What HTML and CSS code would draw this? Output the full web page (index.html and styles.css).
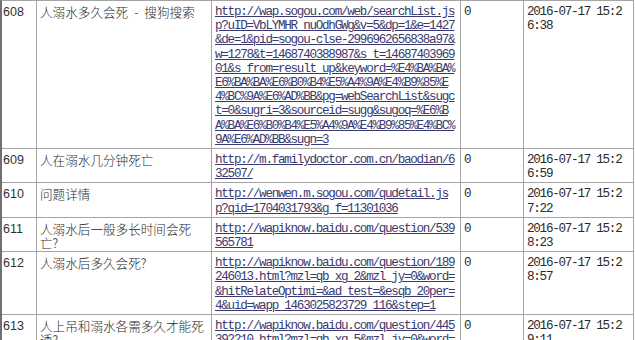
FILE: index.html
```html
<!DOCTYPE html>
<html lang="zh-CN">
<head>
<meta charset="utf-8">
<title>搜索记录</title>
<link rel="stylesheet" href="styles.css">
</head>
<body>
<div class="sheet">
  <div class="cell id">608</div>
  <div class="cell title">人溺水多久会死<span class="dash">-</span>搜狗搜索</div>
  <div class="cell url"><a href="#">http://wap.sogou.com/web/searchList.js<br>p?uID=VbLYMHR_nuOdhGWg&amp;v=5&amp;dp=1&amp;e=1427<br>&amp;de=1&amp;pid=sogou-clse-2996962656838a97&amp;<br>w=1278&amp;t=1468740388987&amp;s_t=14687403969<br>01&amp;s_from=result_up&amp;keyword=%E4%BA%BA%<br>E6%BA%BA%E6%B0%B4%E5%A4%9A%E4%B9%85%E<br>4%BC%9A%E6%AD%BB&amp;pg=webSearchList&amp;sugc<br>t=0&amp;sugri=3&amp;sourceid=sugg&amp;sugoq=%E6%B<br>A%BA%E6%B0%B4%E5%A4%9A%E4%B9%85%E4%BC%<br>9A%E6%AD%BB&amp;sugn=3</a></div>
  <div class="cell num">0</div>
  <div class="cell date">2016-07-17 15:2<br>6:38</div>

  <div class="cell id">609</div>
  <div class="cell title">人在溺水几分钟死亡</div>
  <div class="cell url"><a href="#">http://m.familydoctor.com.cn/baodian/6<br>32507/</a></div>
  <div class="cell num">0</div>
  <div class="cell date">2016-07-17 15:2<br>6:59</div>

  <div class="cell id">610</div>
  <div class="cell title">问题详情</div>
  <div class="cell url"><a href="#">http://wenwen.m.sogou.com/qudetail.js<br>p?qid=1704031793&amp;g_f=11301036</a></div>
  <div class="cell num">0</div>
  <div class="cell date">2016-07-17 15:2<br>7:22</div>

  <div class="cell id">611</div>
  <div class="cell title">人溺水后一般多长时间会死亡?</div>
  <div class="cell url"><a href="#">http://wapiknow.baidu.com/question/539<br>565781</a></div>
  <div class="cell num">0</div>
  <div class="cell date">2016-07-17 15:2<br>8:23</div>

  <div class="cell id">612</div>
  <div class="cell title">人溺水后多久会死?</div>
  <div class="cell url"><a href="#">http://wapiknow.baidu.com/question/189<br>246013.html?mzl=qb_xg_2&amp;mzl_jy=0&amp;word=<br>&amp;hitRelateOptimi=&amp;ad_test=&amp;esqb_20per=<br>4&amp;uid=wapp_1463025823729_116&amp;step=1</a></div>
  <div class="cell num">0</div>
  <div class="cell date">2016-07-17 15:2<br>8:57</div>

  <div class="cell id">613</div>
  <div class="cell title">人上吊和溺水各需多久才能死透?</div>
  <div class="cell url"><a href="#">http://wapiknow.baidu.com/question/445<br>392210.html?mzl=qb_xg_5&amp;mzl_jy=0&amp;word=</a></div>
  <div class="cell num">0</div>
  <div class="cell date">2016-07-17 15:2<br>9:11</div>
</div>
</body>
</html>
```

FILE: styles.css
```css
html, body {
  margin: 0;
  padding: 0;
  background: #ffffff;
  overflow: hidden;
}

.sheet {
  display: grid;
  grid-template-columns: 34px 174px 248px 62px 109px;
  gap: 1px;
  width: max-content;
  background: #a4a4a4;
  border-top: 1px solid #a4a4a4;
  border-right: 1px solid #a4a4a4;
  border-left: 2px solid #707070;
}

.cell {
  background: #ffffff;
  padding: 4px 3px 1px 3px;
  line-height: 14.2px;
  color: #222222;
  white-space: nowrap;
}

.id {
  padding-left: 1px;
  font-family: "Liberation Sans", Arial, sans-serif;
  font-size: 12.5px;
  color: #333333;
}

.title {
  white-space: normal;
  font-family: "Noto Sans CJK SC", "Noto Sans", sans-serif;
  font-size: 12.6px;
  font-weight: 300;
  color: #2a2a2a;
}

.dash {
  padding: 0 6px;
}

.url,
.num,
.date {
  font-family: "Liberation Mono", "Courier New", monospace;
  font-size: 12.6px;
  letter-spacing: -1.26px;
}

.url a {
  color: #3a3a70;
  text-decoration: underline;
  text-underline-offset: 1px;
}

.num,
.date {
  color: #2a2a2a;
}
```
